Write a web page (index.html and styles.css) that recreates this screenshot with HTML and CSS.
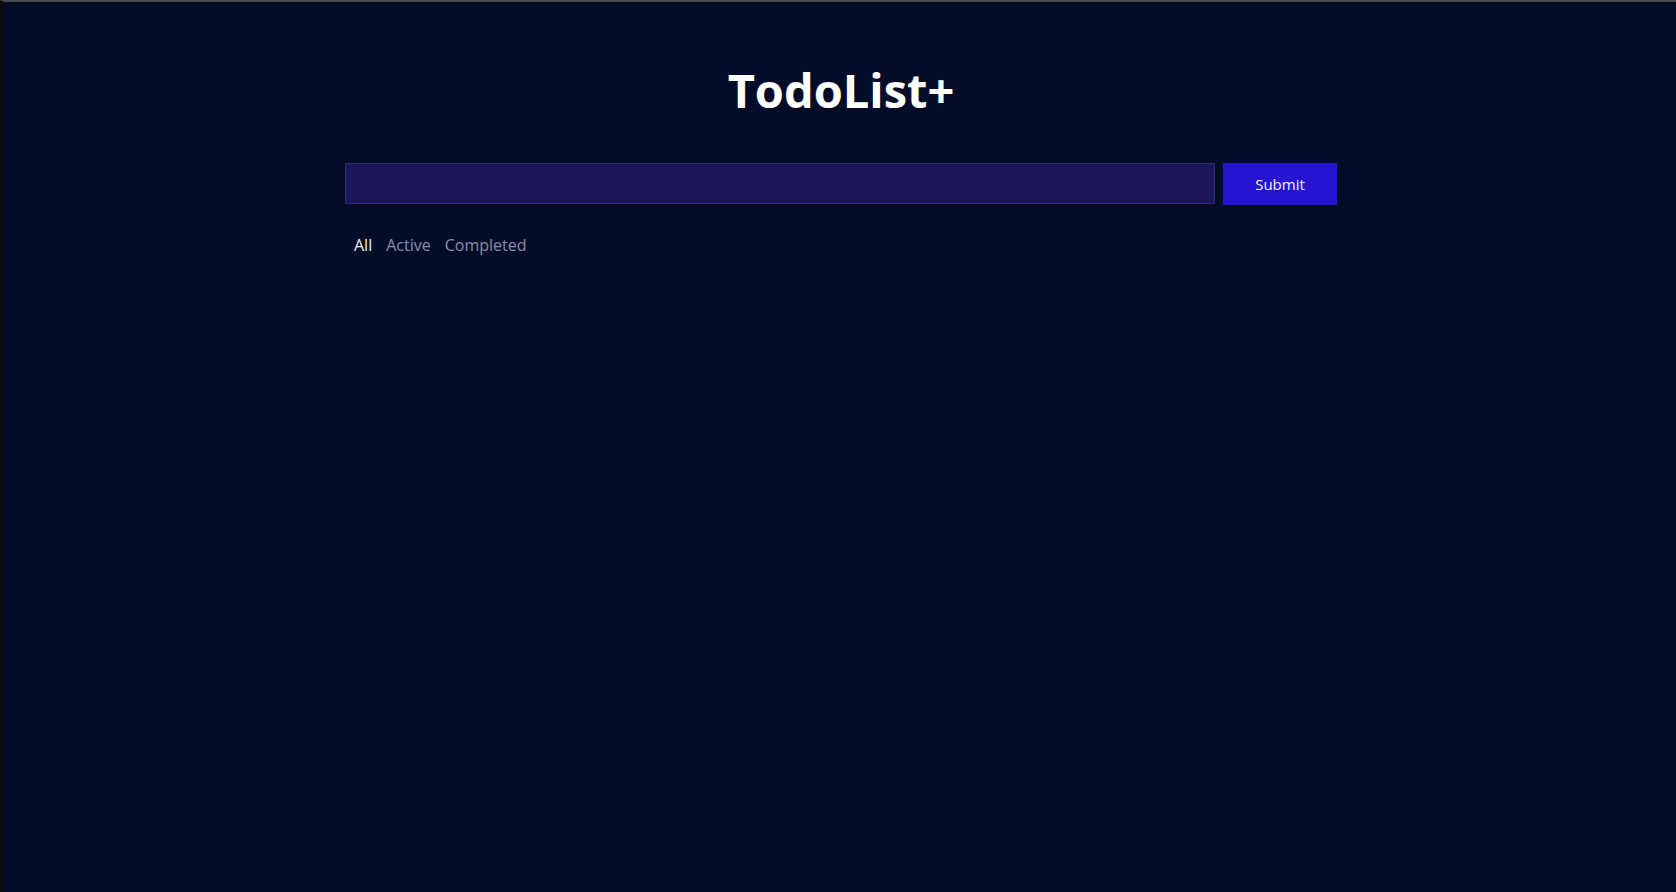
FILE: index.html
```html
<!DOCTYPE html>
<html lang="en">
<head>
<meta charset="utf-8">
<title>TodoList+</title>
<link rel="stylesheet" href="styles.css">
</head>
<body>
<div class="frame">
  <main class="app">
    <h1 class="title">TodoList+</h1>
    <form class="todo-form">
      <input class="todo-input" type="text" aria-label="New todo">
      <button class="submit-btn" type="button">Submit</button>
    </form>
    <nav class="filters">
      <button class="filter is-active" type="button">All</button>
      <button class="filter" type="button">Active</button>
      <button class="filter" type="button">Completed</button>
    </nav>
  </main>
</div>
</body>
</html>
```
FILE: styles.css
```css
* { box-sizing: border-box; }
html, body {
  margin: 0;
  padding: 0;
  height: 100%;
}
body {
  background: #040c28;
  font-family: "Open Sans", "Noto Sans", sans-serif;
  color: #ffffff;
}
.frame {
  min-height: 100%;
  border-top: 2px solid #4a4a4a;
  border-left: 4px solid #0c0f12;
}
.app {
  width: 992px;
  margin: 0 auto;
  padding-top: 59px;
  transform: translateX(1px);
}
.title {
  margin: 0;
  font-size: 47px;
  line-height: 58px;
  font-weight: 700;
  text-align: center;
  color: #ffffff;
}
.todo-form {
  display: flex;
  gap: 8px;
  margin-top: 44px;
}
.todo-input {
  flex: 1;
  height: 41px;
  background: #1b1658;
  border: 1px solid #2e2a7c;
  outline: none;
  color: #fff;
  font: inherit;
  padding: 0 10px;
}
.submit-btn {
  width: 114px;
  height: 42px;
  background: #2714d0;
  border: none;
  color: #f2f0ff;
  font-family: inherit;
  font-size: 15px;
}
.filters {
  display: flex;
  margin-top: 29px;
}
.filter {
  background: none;
  border: none;
  padding: 0 7px;
  font-family: inherit;
  font-size: 16px;
  line-height: 22px;
  color: #8a8ea8;
}
.filter:first-child {
  padding-left: 9px;
}
.filter.is-active {
  color: #eceef6;
}
```
